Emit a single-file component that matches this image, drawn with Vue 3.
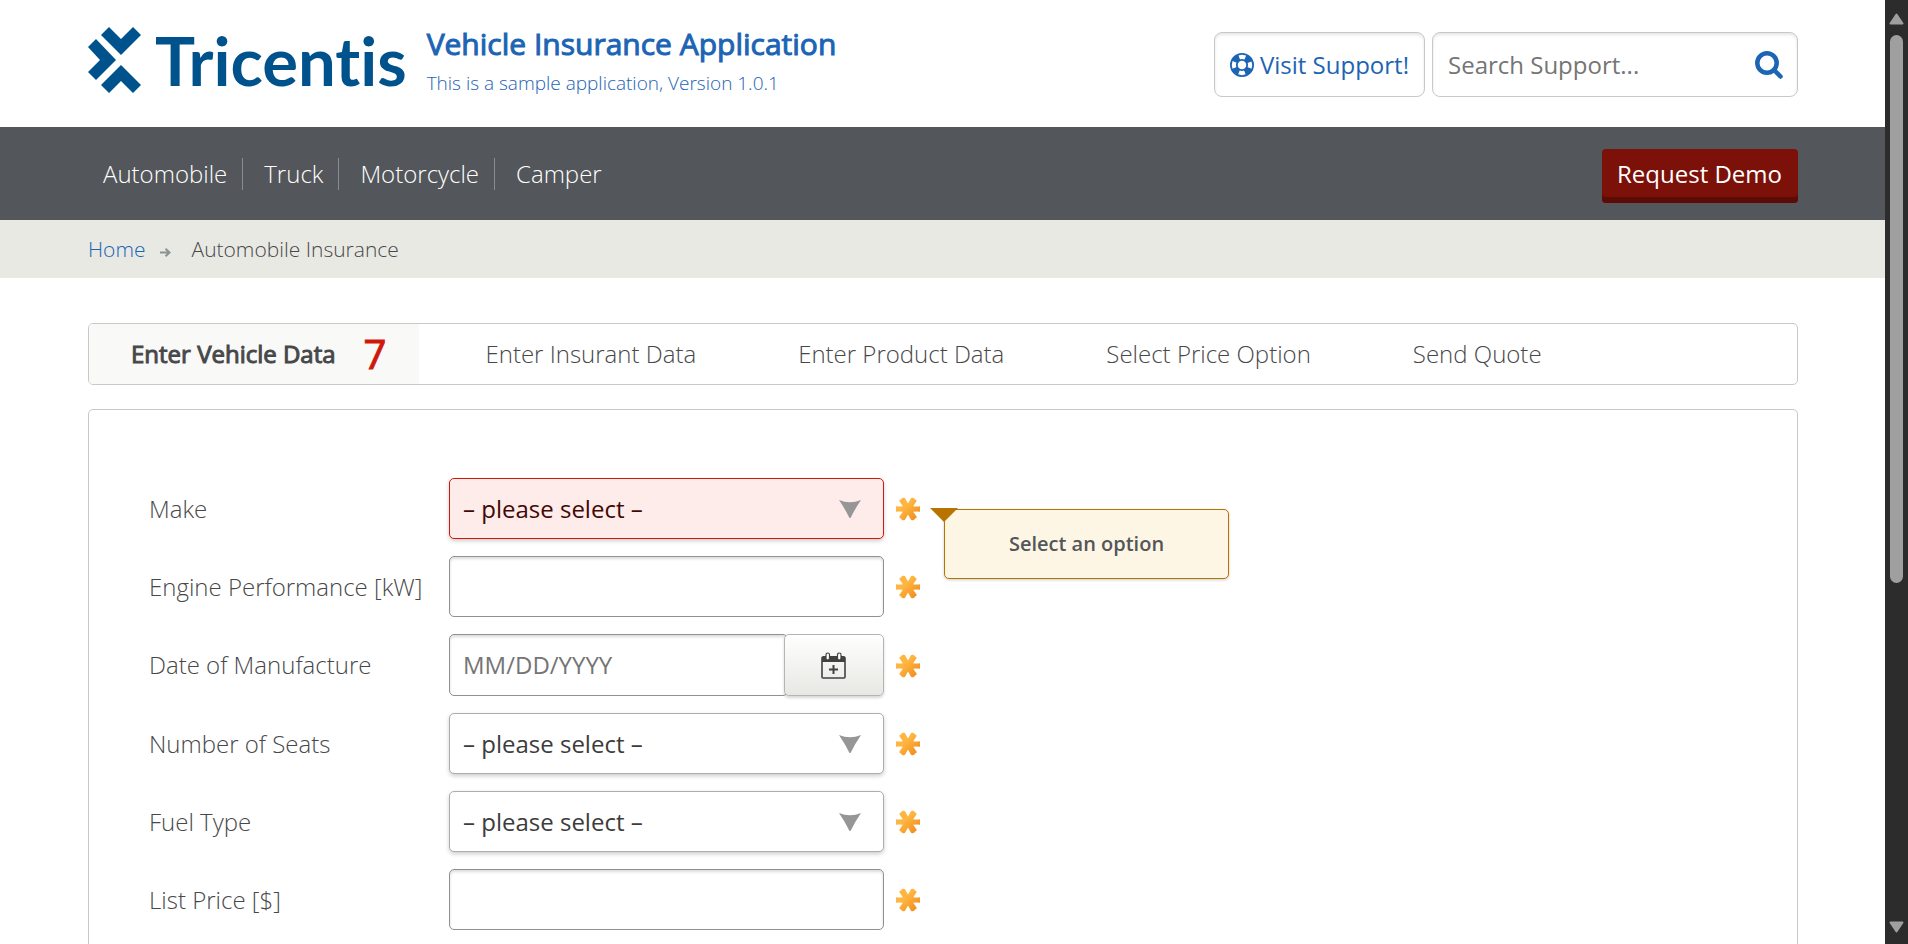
<script setup>
import { ref } from 'vue'

const navItems = ['Automobile', 'Truck', 'Motorcycle', 'Camper']
const steps = ['Enter Insurant Data', 'Enter Product Data', 'Select Price Option', 'Send Quote']
const missing = ref(7)
const fields = ref([
  { id: 'make', label: 'Make', type: 'select', value: '', error: 'Select an option' },
  { id: 'engineperformance', label: 'Engine Performance [kW]', type: 'text', value: '' },
  { id: 'dateofmanufacture', label: 'Date of Manufacture', type: 'date', value: '' },
  { id: 'numberofseats', label: 'Number of Seats', type: 'select', value: '' },
  { id: 'fuel', label: 'Fuel Type', type: 'select', value: '' },
  { id: 'listprice', label: 'List Price [$]', type: 'text', value: '' }
])
</script>

<template>
  <div class="page">
    <div class="view">
      <header class="top">
        <a class="logo" href="#" aria-label="Tricentis home">
          <svg class="mark" viewBox="0 0 53 66" aria-hidden="true">
            <path d="M13 8 21 0 33 12 45 0 53 8 33 28Z" />
            <path d="M0 20 8 12 28 33 8 53 0 45 12 33Z" />
            <path d="M33 38 53 58 45 66 33 54 21 66 13 58Z" />
          </svg>
          <span class="wordmark">Tricentis</span>
        </a>
        <div class="titles">
          <h1>Vehicle Insurance Application</h1>
          <p>This is a sample application, Version 1.0.1</p>
        </div>
        <div class="tools">
          <a class="support" href="#">
            <svg class="ring" viewBox="0 0 24 24" aria-hidden="true">
              <circle cx="12" cy="12" r="8" class="ring-body" />
              <circle cx="12" cy="12" r="11.1" class="ring-line" />
              <circle cx="12" cy="12" r="5.2" class="ring-line" />
            </svg>
            <span>Visit Support!</span>
          </a>
          <form class="search" @submit.prevent>
            <input type="text" placeholder="Search Support..." aria-label="Search Support" />
            <button type="submit" aria-label="Search">
              <svg viewBox="0 0 28 28" aria-hidden="true">
                <circle cx="12" cy="12" r="9.7" />
                <path d="M19 19 25.5 25.5" />
              </svg>
            </button>
          </form>
        </div>
      </header>

      <nav class="nav">
        <ul>
          <li v-for="item in navItems" :key="item"><a href="#">{{ item }}</a></li>
        </ul>
        <a class="demo" href="#">Request Demo</a>
      </nav>

      <div class="crumbs">
        <a href="#">Home</a>
        <svg viewBox="0 0 11 9" aria-hidden="true"><path d="M0 4.5H9.5M5.5 .7 9.5 4.5 5.5 8.3" /></svg>
        <span>Automobile Insurance</span>
      </div>

      <main>
        <div class="steps">
          <a class="active" href="#"><strong>Enter Vehicle Data</strong><span class="count">{{ missing }}</span></a>
          <a v-for="step in steps" :key="step" class="step" href="#">{{ step }}</a>
        </div>

        <form class="panel" @submit.prevent>
          <div v-for="field in fields" :key="field.id" class="row">
            <label :for="field.id">{{ field.label }}</label>
            <div v-if="field.type === 'select'" class="select" :class="{ invalid: field.error }">
              <select :id="field.id" v-model="field.value">
                <option value="">– please select –</option>
              </select>
              <svg viewBox="0 0 22 18" aria-hidden="true"><path d="M0 0Q11 4.5 22 0Q16.5 8 11.5 18H10.5Q5.5 8 0 0Z" /></svg>
            </div>
            <div v-else-if="field.type === 'date'" class="date">
              <input :id="field.id" v-model="field.value" type="text" placeholder="MM/DD/YYYY" />
              <button type="button" aria-label="Open calendar">
                <svg viewBox="0 0 26 27" aria-hidden="true">
                  <path class="cal-head" d="M1 6Q1 4 3 4H22Q24 4 24 6V10H1Z" />
                  <rect class="cal-line" x="1" y="5" width="23" height="21" rx="1" />
                  <rect class="cal-pin" x="5" y="1" width="3.5" height="7" rx="1.7" />
                  <rect class="cal-pin" x="16.5" y="1" width="3.5" height="7" rx="1.7" />
                  <path class="cal-plus" d="M8 17.5H17M12.5 13V22" />
                </svg>
              </button>
            </div>
            <input v-else :id="field.id" v-model="field.value" class="text" type="text" />
            <svg class="star" viewBox="0 0 24 24" aria-hidden="true">
              <defs>
                <linearGradient :id="field.id + '-fill'" x1="0" y1="0" x2="1" y2="1">
                  <stop offset="0.4" stop-color="#ffb541" />
                  <stop offset="1" stop-color="#ee8516" />
                </linearGradient>
              </defs>
              <path
                :fill="'url(#' + field.id + '-fill)'"
                d="M0 9.2Q3.5 9.8 6.8 9.3L3.3 4Q3.3 2.8 5 2.5Q5.5 .6 7.5 .8Q8.9 .6 9.3 1.8L12 6.5 14.7 1.8Q15.2 .6 16.5 .8Q18.5 .6 19 2.5Q20.8 2.8 20.5 4.3L17.2 9.3Q20.5 9.8 24 9.2V14.7Q20.5 14.2 17.2 14.8L20.7 19.8Q20.8 21.2 19 21.5Q18.5 23.4 16.5 23.2Q15.2 23.4 14.7 22.2L12 17.5 9.3 22.2Q8.9 23.4 7.5 23.2Q5.5 23.4 5 21.5Q3.3 21.2 3.3 19.8L6.8 14.8Q3.5 14.2 0 14.7Z"
              />
            </svg>
            <div v-if="field.error" class="tip" role="alert">{{ field.error }}</div>
          </div>
        </form>
      </main>
    </div>

    <div class="scroll" aria-hidden="true">
      <svg viewBox="0 0 15 12"><path d="M7.5 1.5 13.5 10.5H1.5Z" /></svg>
      <div class="thumb"></div>
      <svg viewBox="0 0 15 12"><path d="M7.5 10.5 13.5 1.5H1.5Z" /></svg>
    </div>
  </div>
</template>

<style>
body {
  margin: 0;
  overflow: hidden;
}
</style>

<style scoped>
.page {
  display: grid;
  grid-template-columns: 1fr 23px;
  height: 100vh;
  overflow: hidden;
  background: #fff;
  color: #47484a;
  font: 300 24px/32px 'Open Sans', 'Noto Sans', sans-serif;
}
.page *,
.page *::before {
  box-sizing: border-box;
}
a {
  color: #1c64b4;
  text-decoration: none;
}
input,
select,
button {
  font: inherit;
  color: inherit;
}
.view {
  min-width: 0;
  overflow: hidden;
}
.top {
  display: flex;
  align-items: flex-start;
  height: 127px;
  padding: 26px 87px 0 88px;
}
.logo {
  display: flex;
  align-items: center;
  gap: 14px;
  height: 68px;
  margin-right: 20px;
  color: #00528c;
}
.mark {
  width: 53px;
  height: 66px;
  fill: #00528c;
}
.wordmark {
  font: 700 67px/68px Lato, 'Open Sans', sans-serif;
  font-variant-ligatures: none;
}
.titles h1 {
  margin: 0;
  color: #1c64b4;
  font-size: 30px;
  font-weight: 400;
  line-height: 36px;
  -webkit-text-stroke: 1px #1c64b4;
}
.titles p {
  margin: 0;
  padding-top: 7px;
  color: #1c64b4;
  font-size: 19px;
  line-height: 28px;
}
.tools {
  display: flex;
  gap: 7px;
  margin-top: 6px;
  margin-left: auto;
}
.support,
.search {
  display: flex;
  align-items: center;
  height: 65px;
  border: 1px solid #c8c8c8;
  border-radius: 8px;
  box-shadow: inset 0 2px 3px rgba(0, 0, 0, 0.1);
  font-weight: 400;
}
.support {
  gap: 6px;
  padding: 0 15px;
}
.ring {
  width: 24px;
  height: 24px;
}
.ring-body {
  fill: none;
  stroke: #1c64b4;
  stroke-width: 6;
  stroke-dasharray: 6.5 6.07;
  stroke-dashoffset: -3.03;
}
.ring-line {
  fill: none;
  stroke: #1c64b4;
  stroke-width: 1.8;
}
.search {
  width: 366px;
  padding: 0 14px 0 15px;
}
.search input {
  flex: 1;
  min-width: 0;
  padding: 0;
  border: 0;
  outline: 0;
  background: transparent;
}
.search input::placeholder,
.date input::placeholder {
  color: #757575;
  opacity: 1;
}
.search button {
  display: flex;
  padding: 0;
  border: 0;
  background: none;
}
.search button svg {
  width: 28px;
  height: 28px;
  fill: none;
  stroke: #1c64b4;
  stroke-width: 4.5;
  stroke-linecap: round;
}
.nav {
  display: flex;
  align-items: center;
  justify-content: space-between;
  height: 93px;
  padding: 0 87px 0 88px;
  background: #53565a;
}
.nav ul {
  display: flex;
  gap: 6px;
  margin: 0;
  padding: 0;
  list-style: none;
}
.nav li {
  padding: 0 15px;
  border-right: 1px solid #8b8d90;
}
.nav li:last-child {
  border-right: 0;
}
.nav li a {
  color: #fff;
}
.demo {
  height: 54px;
  margin-top: 5px;
  padding: 0 16px 0 15px;
  border-radius: 4px;
  background: #7b1108;
  box-shadow: inset 0 -6px #5b0c05;
  color: #fff;
  font-weight: 400;
  line-height: 50px;
}
.crumbs {
  display: flex;
  align-items: center;
  height: 58px;
  padding: 0 88px;
  background: #e9e9e4;
  font-size: 21px;
}
.crumbs svg {
  width: 11px;
  height: 9px;
  margin: 7px 21px 0 14px;
  fill: none;
  stroke: #8c9294;
  stroke-width: 2;
}
main {
  padding: 45px 87px 0 88px;
}
.steps {
  display: flex;
  height: 62px;
  border: 1px solid #c8c8c8;
  border-radius: 5px;
  line-height: 60px;
  overflow: hidden;
}
.steps a {
  color: #47484a;
}
.steps .active {
  display: flex;
  gap: 28px;
  margin-right: 15px;
  padding: 0 33px 0 42px;
  background: #f9f9f8;
}
.active strong {
  font-weight: 400;
  -webkit-text-stroke: 1px #47484a;
}
.count {
  color: #d0190b;
  font-size: 40px;
  font-weight: 400;
  -webkit-text-stroke: 1px #d0190b;
}
.step {
  padding: 0 51px;
}
.panel {
  display: flex;
  flex-direction: column;
  gap: 17px;
  height: 100vh;
  margin-top: 24px;
  padding: 68px 60px;
  border: 1px solid #c8c8c8;
  border-radius: 5px;
}
.row {
  display: flex;
  align-items: center;
  position: relative;
}
.row label {
  width: 300px;
}
.select,
.date,
.text {
  width: 435px;
  height: 61px;
  border-radius: 5px;
}
.date {
  height: 62px;
}
.select {
  position: relative;
}
.select select {
  width: 100%;
  height: 100%;
  padding: 0 50px 0 13px;
  border: 1px solid #adadad;
  border-radius: 5px;
  outline: 0;
  background: #fff;
  box-shadow: 0 2px 4px rgba(0, 0, 0, 0.2);
  color: #3c3c3c;
  font-weight: 400;
  appearance: none;
}
.select svg {
  position: absolute;
  top: 22px;
  right: 23px;
  width: 22px;
  height: 18px;
  fill: #969696;
  pointer-events: none;
}
.select.invalid select {
  border-color: #d0190b;
  background: #fdecea;
  color: #410905;
}
.text,
.date input {
  padding: 0 13px;
  border: 1px solid #919191;
  outline: 0;
  background: #fff;
  box-shadow: inset 0 2px 3px rgba(0, 0, 0, 0.14);
  font-weight: 400;
}
.date {
  display: flex;
}
.date input {
  flex: 1;
  min-width: 0;
  margin-right: -4px;
  border-radius: 5px;
}
.date button {
  z-index: 1;
  display: flex;
  align-items: center;
  justify-content: center;
  width: 100px;
  padding: 0;
  border: 1px solid #b5b5b5;
  border-radius: 5px;
  background: linear-gradient(#fff, #e7e7e3);
  box-shadow: 0 2px 3px rgba(0, 0, 0, 0.16);
}
.date button svg {
  width: 26px;
  height: 27px;
}
.cal-head {
  fill: #424242;
}
.cal-line {
  fill: none;
  stroke: #424242;
  stroke-width: 1.6;
}
.cal-pin {
  fill: #fff;
  stroke: #424242;
  stroke-width: 1.2;
}
.cal-plus {
  stroke: #424242;
  stroke-width: 2;
}
.star {
  width: 24px;
  height: 24px;
  margin-top: 1px;
  margin-left: 12px;
}
.tip {
  position: absolute;
  top: 31px;
  left: 795px;
  z-index: 2;
  width: 285px;
  height: 70px;
  border: 1px solid #b87400;
  border-radius: 5px;
  background: #fef6e4;
  box-shadow: 0 1px 3px rgba(0, 0, 0, 0.2);
  color: #53565a;
  font-size: 20px;
  font-weight: 600;
  line-height: 68px;
  text-align: center;
}
.tip::before {
  content: '';
  position: absolute;
  top: -2px;
  left: -15px;
  border: 14px solid transparent;
  border-top-color: #b87400;
  border-bottom: 0;
}
.scroll {
  display: flex;
  flex-direction: column;
  align-items: center;
  padding: 13px 0 11px;
  background: #2c2c2c;
}
.scroll svg {
  width: 15px;
  height: 12px;
  fill: #9f9f9f;
  stroke: #9f9f9f;
  stroke-width: 2;
  stroke-linejoin: round;
}
.scroll svg:last-child {
  margin-top: auto;
}
.thumb {
  width: 13px;
  height: 58vh;
  margin-top: 10px;
  border-radius: 7px;
  background: #9f9f9f;
}
</style>
